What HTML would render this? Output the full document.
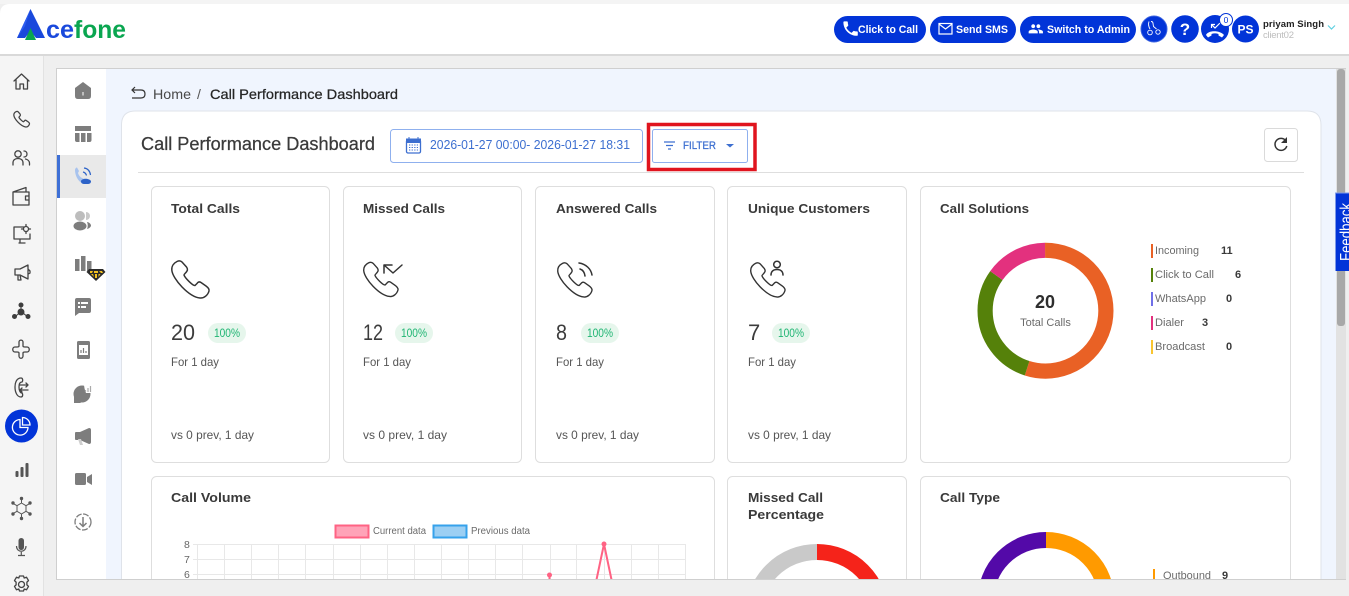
<!DOCTYPE html>
<html lang="en">
<head>
<meta charset="utf-8">
<title>Call Performance Dashboard</title>
<style>
html,body{margin:0;padding:0;width:1349px;height:596px;overflow:hidden;background:#f0f0f0}
svg{display:block;font-family:"Liberation Sans",Arial,sans-serif}
.card{fill:#fff;stroke:#dedede;stroke-width:1}
.h{font-weight:700;font-size:13px;fill:#3a3a3a}
.n{font-size:22px;fill:#3c3c3c}
.p{font-size:11.500px;fill:#1fb573}
.s{font-size:12px;fill:#555}
.l{font-size:11px;fill:#6b6b6b}
.l2{font-size:10px;fill:#6b6b6b}
.v{font-size:11px;font-weight:700;fill:#3a3a3a}
.b{font-size:11px;font-weight:700;fill:#fff}
.ic{fill:none;stroke:#444;stroke-width:1.300;stroke-linecap:round;stroke-linejoin:round}
.g{fill:#7d7d7d}
.ph{fill:none;stroke:#333;stroke-width:1.500;stroke-linejoin:round;stroke-linecap:round}
.grid{stroke:#e8e8e8;stroke-width:1}
.m{stroke-width:.25px}
</style>
</head>
<body>
<svg width="1349" height="596" viewBox="0 0 1349 596" xmlns="http://www.w3.org/2000/svg">
<defs>
<path id="hs" d="M6 1.500C3 3 .5 6 .8 10 1.500 19 18 37 29 38 33 38.500 37 35 38 31 38.500 29 37 27.500 35 26L30 22.500C28.500 21.500 27 22 26 23.500L24 25.500C22 26 14 18 13 15 13 14 15 13 16 11 17 9.500 16.500 8.500 15.500 7L11 2C9.500 .5 8 .5 6 1.500Z"/>
</defs>

<!-- page background -->
<rect width="1349" height="596" fill="#efefef"/>
<rect x="0" y="54" width="43" height="542" fill="#f5f5f5"/>
<line x1="43.500" y1="54" x2="43.500" y2="596" stroke="#e2e2e2"/>

<!-- header -->
<rect x="0" y="0" width="1349" height="4" fill="#f4f4f4"/>
<rect x="0" y="54" width="1349" height="2" fill="#d9d9d9"/>
<path d="M0 54V14Q0 4 10 4H1349V54Z" fill="#fff"/>
<!-- logo -->
<path d="M30.500 9 17 38H25L30.500 31 36 38H45Z" fill="#1a49dc"/>
<path d="M30.500 9 25 26 17 38Z" fill="#2c5cf0"/>
<path d="M30.500 28 25 40H36Z" fill="#0aa650"/>
<text x="46" y="38" font-size="25" font-weight="700" fill="#1a49dc" textLength="28" lengthAdjust="spacingAndGlyphs">ce</text>
<text x="74" y="38" font-size="25" font-weight="700" fill="#0aa650" textLength="52" lengthAdjust="spacingAndGlyphs">fone</text>

<!-- header buttons -->
<rect x="834" y="16" width="92" height="27" rx="13.500" fill="#0234d8"/>
<path transform="translate(841 19) scale(.8)" d="M6.620 10.790c1.440 2.830 3.760 5.140 6.590 6.590l2.200-2.200c.27-.27.67-.36 1.020-.24 1.120.37 2.330.57 3.570.57.55 0 1 .45 1 1V20c0 .55-.45 1-1 1-9.390 0-17-7.610-17-17 0-.55.45-1 1-1h3.500c.55 0 1 .45 1 1 0 1.250.2 2.450.57 3.570.11.35.03.74-.25 1.020l-2.200 2.200z" fill="#fff"/>
<text class="b" x="858" y="33" textLength="60" lengthAdjust="spacingAndGlyphs">Click to Call</text>
<rect x="930" y="16" width="86" height="27" rx="13.500" fill="#0234d8"/>
<rect x="939" y="23.500" width="13" height="10.500" fill="none" stroke="#fff" stroke-width="1.200"/>
<path d="M939 24l6.500 5 6.500-5" fill="none" stroke="#fff" stroke-width="1.200"/>
<text class="b" x="956" y="33" textLength="52" lengthAdjust="spacingAndGlyphs">Send SMS</text>
<rect x="1020" y="16" width="116" height="27" rx="13.500" fill="#0234d8"/>
<path transform="translate(1028 21) scale(.65)" fill="#fff" d="M16 11c1.660 0 2.990-1.340 2.990-3S17.660 5 16 5c-1.660 0-3 1.340-3 3s1.340 3 3 3zm-8 0c1.660 0 2.990-1.340 2.990-3S9.660 5 8 5C6.340 5 5 6.340 5 8s1.340 3 3 3zm0 2c-2.330 0-7 1.170-7 3.500V19h14v-2.500c0-2.330-4.670-3.500-7-3.500zm8 0c-.29 0-.62.02-.97.05 1.160.84 1.970 1.970 1.970 3.450V19h6v-2.500c0-2.330-4.670-3.500-7-3.500z"/>
<text class="b" x="1047" y="33" textLength="83" lengthAdjust="spacingAndGlyphs">Switch to Admin</text>

<circle cx="1154" cy="29" r="13" fill="#0234d8" stroke="#3a62e0"/>
<g fill="none" stroke="#fff" stroke-width=".9"><path d="M1151 21.500c1.500 0 2 1 2 2l.5 3 3 2.500"/><circle cx="1150" cy="32.500" r="2.300"/><circle cx="1158" cy="32" r="2.200"/><path d="M1149 21.500c-1 3-.5 5 1 7.500"/></g>
<circle cx="1185" cy="29" r="13.800" fill="#0234d8"/>
<text x="1185" y="35" font-size="17" font-weight="700" fill="#fff" text-anchor="middle">?</text>
<circle cx="1215" cy="29" r="14" fill="#0234d8"/>
<path d="M1206 35c2-5 14-5 18 0l-2 2.500-3.500-2v-1.500c-2-.8-5-.8-7 0v1.500l-3.500 2z" fill="#fff"/>
<path d="M1220 23l-5 5-3.500-3.500M1211.500 28v-3.500h3.500" fill="none" stroke="#fff" stroke-width="1.200"/>
<circle cx="1226" cy="20" r="6.500" fill="#fff" stroke="#0234d8"/>
<text x="1226" y="23" font-size="8.500" fill="#0234d8" text-anchor="middle">0</text>
<circle cx="1245.500" cy="29" r="13.500" fill="#0234d8"/>
<text x="1245.500" y="33.500" font-size="12" font-weight="700" fill="#fff" text-anchor="middle">PS</text>
<text x="1263" y="27" font-size="9.500" font-weight="700" fill="#222" textLength="61">priyam Singh</text>
<text x="1263" y="38" font-size="9.500" fill="#bdbdbd" textLength="31">client02</text>
<path d="M1328 25.500l3.500 3.500 3.500-3.500" fill="none" stroke="#5fd0e0" stroke-width="1.200"/>

<!-- main panel -->
<rect x="56.500" y="68.500" width="1289" height="512" fill="#f0f5fe" stroke="#cfcfcf"/>
<rect x="57" y="69" width="49" height="511" fill="#fff"/>
<!-- scrollbar -->
<rect x="1336" y="69" width="10" height="511" fill="#e2e2e2"/>
<rect x="1337" y="69" width="8" height="257" rx="3" fill="#a8a8a8"/>

<!-- left rail icons -->
<g class="ic">
  <path d="M14 81l7.500-7 7.500 7M16 79.500V89h4v-5h3.500v5h4v-9.500"/>
  <g transform="translate(13.500 111) scale(.42)" stroke-width="3"><use href="#hs"/></g>
  <g><circle cx="18" cy="154" r="3.200"/><path d="M13 165v-2c0-3 2-4.500 5-4.500s5 1.500 5 4.500v2M24 151c2 0 3 1.500 3 3s-1 3-3 3M25.500 159c2 .5 4 2 4 4v2"/></g>
  <path d="M13 192h16v13H13zM13 192l13-4.500V192M29 196h-3.500v4H29" />
  <g><path d="M24 227H14v12h16v-5M22 243h-2v-4M19 243h6"/><circle cx="26" cy="229" r="2.500"/><path d="M26 224.500v1.500M26 232v1.500M21.500 229H23M29 229h1.500"/></g>
  <path d="M15 269h5l8-4v14l-8-4h-5zM18 275v5h3l-1-5M28 269l2 2v2l-2 1"/>
</g>
<g fill="#3d3d3d"><circle cx="21" cy="305" r="2.500"/><circle cx="21" cy="312" r="3.500"/><circle cx="14.500" cy="316.500" r="2.500"/><circle cx="28" cy="316.500" r="2.500"/><path d="M20.500 305h1v5h-1zM15 316l5-4 .7.700-5 4zM27.500 316l-5-4-.7.700 5 4z"/></g>
<g class="ic">
  <path d="M19 342c0-2.500 4-2.500 4 0v4c0 1 1 1 2 1h2c3 0 3 5 0 5h-2c-1 0-2 0-2 1v3c0 3-4 3-4 0v-3c0-1-1-1-2-1h-2c-3 0-3-5 0-5h2c1 0 2 0 2-1z"/>
  <path d="M21 378c-4 0-6 4-6 9s2 10 6 10c2 0 2-3 1-4-2 0-3-3-3-6s1-5 3-5c1-1 1-4-1-4zM20 385h8M26 383l2 2-2 2M28 390h-8M22 388l-2 2 2 2"/>
</g>
<circle cx="21.500" cy="426" r="16.500" fill="#0234d8"/>
<g fill="none" stroke="#fff" stroke-width="1.300"><path d="M20 419.500a7.800 7.800 0 1 0 8 8h-8z"/><path d="M22.500 417.500a7.500 7.500 0 0 1 7.500 7.500h-7.500z"/></g>
<g fill="#555"><rect x="15.500" y="471" width="3" height="6" rx="1"/><rect x="20.500" y="467" width="3" height="10" rx="1"/><rect x="25.500" y="463" width="3" height="14" rx="1"/></g>
<g class="ic" stroke="#555" style="stroke:#555;stroke-width:1"><path d="M21.500 503l4.500 2.700v5.600l-4.500 2.700-4.500-2.700v-5.600zM21.500 503v-4.500M21.500 514v4.500M26 505.700l3.500-2M17 511.300l-3.500 2M26 511.300l3.500 2M17 505.700l-3.500-2"/></g>
<g fill="#555"><circle cx="21.500" cy="498.500" r="1.700"/><circle cx="21.500" cy="518.500" r="1.700"/><circle cx="30" cy="503" r="1.700"/><circle cx="13" cy="503" r="1.700"/><circle cx="30" cy="514" r="1.700"/><circle cx="13" cy="514" r="1.700"/></g>
<rect x="18.500" y="538" width="5.500" height="12" rx="2.700" fill="#555"/>
<path d="M16.500 546c0 7 9.500 7 9.500 0M21.300 552v4M18 555.500h7" fill="none" stroke="#555" stroke-width="1.200"/>

<!-- sub rail -->
<rect x="57" y="155" width="49" height="43" fill="#e9e9e9"/>
<rect x="57" y="155" width="3" height="43" fill="#3e70d6"/>
<path d="M75 88l8-6 8 6v8q0 3-3 3H78q-3 0-3-3z" class="g"/>
<rect x="82.500" y="92" width="1" height="3.500" fill="#fff"/>
<path d="M75 126h16v5H75zM75 133h4.500v9H77q-2 0-2-2zM81 133h4.500v9H81zM87 133h4.500v7q0 2-2 2H87z" class="g"/>
<path d="M75 170c0-1.500 1-2.500 2-2.500l2 3.500-1 2c.5 2 2 4 4 5l2 1 1 3c-1 1-3 1-4 .5-3-2-6-7-6-12.500z" fill="#a8c3ee"/>
<path d="M81 181c1-3 8-3 10 0 0 3-2 3-5 3s-5 0-5-3z" fill="#2d63c8"/>
<path d="M83 172c2 .5 3 1.500 3.500 3.500M84 168c3.500 .5 6 3 6.500 7" fill="none" stroke="#2d63c8" stroke-width="1.200"/>
<g class="g"><circle cx="80" cy="216" r="5" fill="#bdbdbd"/><path d="M86 212a4 4 0 0 1 0 8z" fill="#c9c9c9"/><ellipse cx="80" cy="226" rx="6.500" ry="4.500"/><path d="M87 222c2 0 4 2 4 3.500s-2 3-4 3.500c1-2 1-5 0-7z"/></g>
<path d="M75 259h4.500v12H75zM81 256h4.500v15H81zM87 261h4.500v10H87z" class="g"/>
<path d="M89 269h14l2.500 3-9.500 9-9.500-9z" fill="#2b2b2b"/>
<path d="M90 271h3l-1 2h-2zM94 271h4v2h-4zM99 271h3l1 2h-2zM91 274l3 3-1-3zM95 274h2v4h-2zM98.500 274h2l-2 3z" fill="#f3c221"/>
<path d="M77 298h12q2 0 2 2v11q0 2-2 2H79l-4 3v-16q0-2 2-2z" class="g"/>
<path d="M78 302h2v2h-2zM81 302h7v2h-7zM78 306h2v2h-2zM81 306h5v2h-5z" fill="#fff"/>
<rect x="77" y="341" width="13" height="18" rx="1.500" class="g"/>
<rect x="79" y="345" width="9" height="10" fill="#fff"/>
<path d="M81 353v-3M83.500 353v-5M86 353v-2" stroke="#7d7d7d" stroke-width="1.200"/>
<circle cx="82" cy="394" r="8.500" class="g"/>
<path d="M74 396v7h7z" class="g"/>
<path d="M84 384h8v9h-6q-2-5-2-9z" fill="#fff"/>
<path d="M85.500 392v-2M88 392v-4M90.500 392v-6" stroke="#aaa" stroke-width="1.200"/>
<path d="M75 433q0-1 1-1h4l9-4q2 0 2 2v12q0 2-2 2l-9-4h-4q-1 0-1-1z" class="g"/>
<path d="M78 439l2 6h3l-2-6z" fill="#cfcfcf"/>
<rect x="75" y="473" width="11" height="12" rx="1.500" class="g"/>
<path d="M87 477l5-3v11l-5-3z" class="g"/>
<circle cx="83" cy="522" r="8" fill="none" stroke="#7d7d7d" stroke-width="1.300" stroke-dasharray="6 1.500"/>
<path d="M83 517v9M79.500 523l3.500 3.500 3.500-3.500" fill="none" stroke="#7d7d7d" stroke-width="1.500"/>

<!-- breadcrumb -->
<path d="M132 90h9q4 0 4 4t-4 4h-9M135 87l-3 3 3 3" fill="none" stroke="#333" stroke-width="1.200"/>
<text x="153" y="99" font-size="14" fill="#484848" textLength="38" lengthAdjust="spacingAndGlyphs">Home</text>
<text x="197" y="99" font-size="14" fill="#555">/</text>
<text class="m" x="210" y="99" font-size="14" fill="#262626" stroke="#262626" textLength="188" lengthAdjust="spacingAndGlyphs">Call Performance Dashboard</text>

<!-- main card -->
<path d="M121.500 580V125q0-14 14-14H1307q14 0 14 14V580" fill="#fff" stroke="#dfe3ea"/>
<line x1="138" y1="172.500" x2="1304" y2="172.500" stroke="#dedede"/>
<text class="m" x="141" y="150" font-size="18" fill="#3a3a3a" stroke="#3a3a3a" textLength="234" lengthAdjust="spacingAndGlyphs">Call Performance Dashboard</text>

<rect x="390.500" y="129.500" width="252" height="33" rx="3" fill="#fff" stroke="#8fb0ee"/>
<rect x="406.500" y="140" width="14" height="13" rx="1.500" fill="none" stroke="#3d6fd0" stroke-width="1.300"/>
<path d="M406.500 139h14v3.500h-14zM409 137v3M418 137v3" fill="#3d6fd0" stroke="#3d6fd0"/>
<path d="M409 145h9M409 147.500h9M409 150h9" stroke="#3d6fd0" stroke-dasharray="1.300 1.300"/>
<text x="430" y="149" font-size="12.500" fill="#3d6fd0" textLength="200" lengthAdjust="spacingAndGlyphs">2026-01-27 00:00- 2026-01-27 18:31</text>

<rect x="648.500" y="124.500" width="106.500" height="45" fill="none" stroke="#e0141e" stroke-width="3.500"/>
<rect x="652.500" y="129.500" width="95" height="33" rx="2" fill="#fff" stroke="#8fb0ee"/>
<path d="M664 142h11M666 145.500h7M668 149h3" stroke="#3d6fd0" stroke-width="1.200"/>
<text class="m" x="683" y="149" font-size="11" fill="#3d6fd0" stroke="#3d6fd0" textLength="33" lengthAdjust="spacingAndGlyphs">FILTER</text>
<path d="M726 144h8l-4 3.500z" fill="#3d6fd0"/>

<rect x="1264.500" y="128.500" width="33" height="33" rx="3" fill="#fff" stroke="#dadada"/>
<path d="M1286 141a6 6 0 1 0 .8 5" fill="none" stroke="#333" stroke-width="1.500"/>
<path d="M1287 137v6h-6z" fill="#333"/>

<!-- stat cards -->
<rect class="card" x="151.500" y="186.500" width="178" height="276" rx="5"/>
<rect class="card" x="343.500" y="186.500" width="178" height="276" rx="5"/>
<rect class="card" x="535.500" y="186.500" width="179" height="276" rx="5"/>
<rect class="card" x="727.500" y="186.500" width="179" height="276" rx="5"/>
<rect class="card" x="920.500" y="186.500" width="370" height="276" rx="5"/>

<text class="h" x="171" y="213" textLength="69" lengthAdjust="spacingAndGlyphs">Total Calls</text>
<text class="h" x="363" y="213" textLength="82" lengthAdjust="spacingAndGlyphs">Missed Calls</text>
<text class="h" x="556" y="213" textLength="101" lengthAdjust="spacingAndGlyphs">Answered Calls</text>
<text class="h" x="748" y="213" textLength="122" lengthAdjust="spacingAndGlyphs">Unique Customers</text>
<text class="h" x="940" y="213" textLength="89" lengthAdjust="spacingAndGlyphs">Call Solutions</text>

<!-- phone icons -->
<g class="ph" transform="translate(171 260)"><use href="#hs"/></g>
<g class="ph" transform="translate(363 261.500) scale(.92)" stroke-width="1.600"><use href="#hs"/></g>
<path d="M384 265l9 8 9-8M384 265h8M384 265v8" class="ph" stroke-width="1.200"/>
<g class="ph" transform="translate(557 262) scale(.92)" stroke-width="1.600"><use href="#hs"/></g>
<path d="M580 269c3 1 4.500 3 5 7M579 263c7 1 12 6 13 12" class="ph" stroke-width="1.200"/>
<g class="ph" transform="translate(750 262) scale(.92)" stroke-width="1.600"><use href="#hs"/></g>
<circle cx="777" cy="264.500" r="3.300" class="ph" stroke-width="1.200"/>
<path d="M771 275c0-4 3-5.500 6-5.500s6 1.500 6 5.500" class="ph" stroke-width="1.200"/>

<!-- numbers -->
<text class="n" x="171" y="340" textLength="24" lengthAdjust="spacingAndGlyphs">20</text>
<text class="n" x="363" y="340" textLength="20" lengthAdjust="spacingAndGlyphs">12</text>
<text class="n" x="556" y="340" textLength="11" lengthAdjust="spacingAndGlyphs">8</text>
<text class="n" x="748" y="340">7</text>
<rect x="208" y="323" width="38" height="20" rx="10" fill="#e6f6ec"/>
<rect x="395" y="323" width="38" height="20" rx="10" fill="#e6f6ec"/>
<rect x="581" y="323" width="38" height="20" rx="10" fill="#e6f6ec"/>
<rect x="772" y="323" width="38" height="20" rx="10" fill="#e6f6ec"/>
<text class="p" x="214" y="337" textLength="26" lengthAdjust="spacingAndGlyphs">100%</text>
<text class="p" x="401" y="337" textLength="26" lengthAdjust="spacingAndGlyphs">100%</text>
<text class="p" x="587" y="337" textLength="26" lengthAdjust="spacingAndGlyphs">100%</text>
<text class="p" x="778" y="337" textLength="26" lengthAdjust="spacingAndGlyphs">100%</text>
<text class="s" x="171" y="366" textLength="48" lengthAdjust="spacingAndGlyphs">For 1 day</text>
<text class="s" x="363" y="366" textLength="48" lengthAdjust="spacingAndGlyphs">For 1 day</text>
<text class="s" x="556" y="366" textLength="48" lengthAdjust="spacingAndGlyphs">For 1 day</text>
<text class="s" x="748" y="366" textLength="48" lengthAdjust="spacingAndGlyphs">For 1 day</text>
<text class="s" x="171" y="439" textLength="83" lengthAdjust="spacingAndGlyphs">vs 0 prev, 1 day</text>
<text class="s" x="363" y="439" textLength="84" lengthAdjust="spacingAndGlyphs">vs 0 prev, 1 day</text>
<text class="s" x="556" y="439" textLength="83" lengthAdjust="spacingAndGlyphs">vs 0 prev, 1 day</text>
<text class="s" x="748" y="439" textLength="83" lengthAdjust="spacingAndGlyphs">vs 0 prev, 1 day</text>

<!-- solutions donut -->
<g fill="none" stroke-width="15.200" transform="rotate(-90 1045.500 310.700)">
  <circle cx="1045.500" cy="310.700" r="60.400" stroke="#e96125" pathLength="20" stroke-dasharray="11 9"/>
  <circle cx="1045.500" cy="310.700" r="60.400" stroke="#55810a" pathLength="20" stroke-dasharray="6 14" stroke-dashoffset="-11"/>
  <circle cx="1045.500" cy="310.700" r="60.400" stroke="#e3317e" pathLength="20" stroke-dasharray="3 17" stroke-dashoffset="-17"/>
</g>
<text x="1045" y="308" font-size="18" font-weight="700" fill="#2e2e2e" text-anchor="middle">20</text>
<text x="1045.500" y="326" font-size="11" fill="#6b6b6b" text-anchor="middle">Total Calls</text>
<rect x="1151" y="244" width="2" height="14" fill="#e96125"/>
<rect x="1151" y="268" width="2" height="14" fill="#55810a"/>
<rect x="1151" y="292" width="2" height="14" fill="#6f6fe8"/>
<rect x="1151" y="316" width="2" height="14" fill="#e3317e"/>
<rect x="1151" y="340" width="2" height="14" fill="#f9c530"/>
<text class="l" x="1155" y="254" textLength="44" lengthAdjust="spacingAndGlyphs">Incoming</text><text class="v" x="1221" y="254">11</text>
<text class="l" x="1155" y="278" textLength="59" lengthAdjust="spacingAndGlyphs">Click to Call</text><text class="v" x="1235" y="278">6</text>
<text class="l" x="1155" y="302" textLength="51" lengthAdjust="spacingAndGlyphs">WhatsApp</text><text class="v" x="1226" y="302">0</text>
<text class="l" x="1155" y="326" textLength="29" lengthAdjust="spacingAndGlyphs">Dialer</text><text class="v" x="1202" y="326">3</text>
<text class="l" x="1155" y="350" textLength="50" lengthAdjust="spacingAndGlyphs">Broadcast</text><text class="v" x="1226" y="350">0</text>

<!-- second row -->
<rect class="card" x="151.500" y="476.500" width="563" height="140" rx="5"/>
<rect class="card" x="727.500" y="476.500" width="179" height="140" rx="5"/>
<rect class="card" x="920.500" y="476.500" width="370" height="140" rx="5"/>
<text class="h" x="171" y="502" textLength="80" lengthAdjust="spacingAndGlyphs">Call Volume</text>
<text class="h" x="748" y="502" textLength="75" lengthAdjust="spacingAndGlyphs">Missed Call</text>
<text class="h" x="748" y="519" textLength="76" lengthAdjust="spacingAndGlyphs">Percentage</text>
<text class="h" x="940" y="502" textLength="60" lengthAdjust="spacingAndGlyphs">Call Type</text>

<!-- chart -->
<rect x="335.500" y="525.500" width="33" height="12" fill="#ffa3b8" stroke="#ff6384" stroke-width="2"/>
<text class="l2" x="373" y="534" textLength="53" lengthAdjust="spacingAndGlyphs">Current data</text>
<rect x="433.500" y="525.500" width="33" height="12" fill="#9ccff3" stroke="#36a2eb" stroke-width="2"/>
<text class="l2" x="471" y="534" textLength="59" lengthAdjust="spacingAndGlyphs">Previous data</text>
<g font-size="10.500" fill="#666"><text x="184" y="548">8</text><text x="184" y="563">7</text><text x="184" y="578">6</text></g>
<g class="grid">
<path d="M193 544.500H686M193 559.500H686M193 574.500H686"/>
<path d="M197.500 544V580M224.500 544V580M251.500 544V580M278.500 544V580M305.500 544V580M333.500 544V580M360.500 544V580M387.500 544V580M414.500 544V580M441.500 544V580M468.500 544V580M495.500 544V580M522.500 544V580M550.500 544V580M576.500 544V580M604.500 544V580M631.500 544V580M658.500 544V580M685.500 544V580"/>
</g>
<path d="M549.500 575V582M596 582 604 544 612 582" fill="none" stroke="#ff6384" stroke-width="2"/>
<circle cx="549.500" cy="575" r="2.500" fill="#ff6384"/>
<circle cx="604" cy="544" r="2.500" fill="#ff6384"/>

<!-- partial donuts -->
<g fill="none" stroke-width="16">
  <path d="M817 552A64 64 0 0 0 753 616" stroke="#c9c9c9"/>
  <path d="M817 552A64 64 0 0 1 881 616" stroke="#f5231a"/>
  <path d="M1046 540A60.400 60.400 0 0 0 985.600 600.400" stroke="#5309a8"/>
  <path d="M1046 540A60.400 60.400 0 0 1 1106.400 600.400" stroke="#ff9a00"/>
</g>
<rect x="1153" y="569" width="2" height="11" fill="#ff9a00"/>
<text class="l" x="1163" y="579" textLength="48" lengthAdjust="spacingAndGlyphs">Outbound</text>
<text class="v" x="1222" y="579">9</text>

<!-- bottom cover -->
<rect x="0" y="580" width="1349" height="16" fill="#efefef"/>
<rect x="0" y="580" width="43" height="16" fill="#f5f5f5"/>
<line x1="43.500" y1="580" x2="43.500" y2="596" stroke="#e2e2e2"/>
<line x1="56" y1="579.500" x2="1346" y2="579.500" stroke="#cfcfcf"/>
<g class="ic"><circle cx="21.500" cy="584.500" r="3"/><path d="M19.500 576h4l.7 2 2.300-.8 2 3.400-1.600 1.500v2.800l1.600 1.500-2 3.400-2.300-.8-.7 2h-4l-.7-2-2.300.8-2-3.400 1.600-1.500v-2.800l-1.600-1.500 2-3.400 2.300.8z"/></g>

<!-- feedback tab -->
<rect x="1335" y="193" width="14" height="78" fill="#0234d8"/>
<path d="M1335.500 271V193H1349" fill="none" stroke="#7f9ae8"/>
<text transform="translate(1351 261) rotate(-90)" font-size="16" fill="#fff" textLength="58" lengthAdjust="spacingAndGlyphs">Feedback</text>
</svg>
</body>
</html>
